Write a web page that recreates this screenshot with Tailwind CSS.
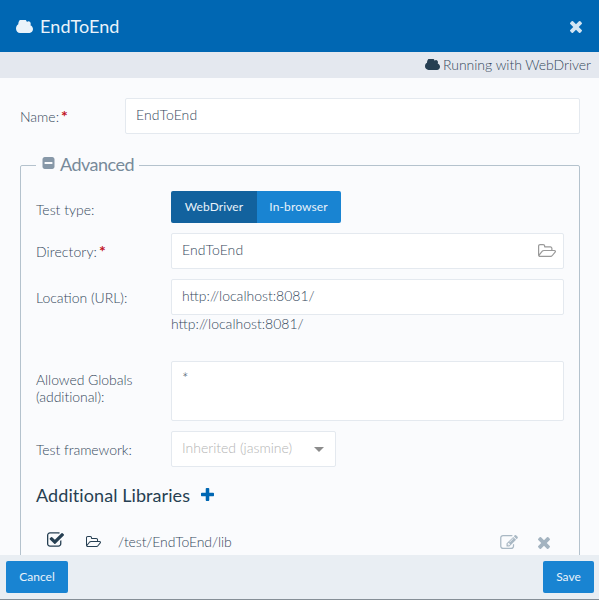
<!DOCTYPE html>
<html lang="en">
<head>
<meta charset="utf-8">
<title>EndToEnd</title>
<script src="https://cdn.jsdelivr.net/npm/@tailwindcss/browser@4"></script>
</head>
<body class="w-[599px] h-[600px] overflow-hidden flex flex-col bg-[#fafbfd] font-['Lato',sans-serif] font-light text-[14px] leading-[17px] text-[#35495c]">
<svg class="hidden">
  <symbol id="cloud" viewBox="0 256 1920 1280" preserveAspectRatio="none"><path d="M1920 1152q0 159-112.500 271.500t-271.500 112.500h-1088q-185 0-316.500-131.500t-131.500-316.500q0-132 71-241.500t187-163.500q-2-28-2-43 0-212 150-362t362-150q158 0 286.500 88t187.500 230q70-62 166-62 106 0 181 75t75 181q0 75-41 138 129 30 213 134.500t84 239.500z"/></symbol>
  <symbol id="times" viewBox="302 366 1188 1188"><path d="M1490 1322q0 40-28 68l-136 136q-28 28-68 28t-68-28l-294-294-294 294q-28 28-68 28t-68-28l-136-136q-28-28-28-68t28-68l294-294-294-294q-28-28-28-68t28-68l136-136q28-28 68-28t68 28l294 294 294-294q28-28 68-28t68 28l136 136q28 28 28 68t-28 68l-294 294 294 294q28 28 28 68z"/></symbol>
  <symbol id="plus" viewBox="192 128 1408 1408"><path d="M1600 736v192q0 40-28 68t-68 28h-416v416q0 40-28 68t-68 28h-192q-40 0-68-28t-28-68v-416h-416q-40 0-68-28t-28-68v-192q0-40 28-68t68-28h416v-416q0-40 28-68t68-28h192q40 0 68 28t28 68v416h416q40 0 68 28t28 68z"/></symbol>
  <symbol id="minus" viewBox="128 128 1536 1536"><path d="M1408 960v-128q0-26-19-45t-45-19h-896q-26 0-45 19t-19 45v128q0 26 19 45t45 19h896q26 0 45-19t19-45zm256-544v960q0 119-84.500 203.500t-203.500 84.500h-960q-119 0-203.500-84.500t-84.500-203.500v-960q0-119 84.500-203.500t203.500-84.500h960q119 0 203.500 84.500t84.500 203.500z"/></symbol>
  <symbol id="folder" viewBox="64 128 1909 1408" preserveAspectRatio="none"><path d="M1845 931q0-35-53-35h-1088q-40 0-85.500 21.500t-71.500 52.500l-294 363q-18 24-18 40 0 35 53 35h1088q40 0 86-22t71-53l294-363q18-22 18-39zm-1141-163h768v-160q0-40-28-68t-68-28h-576q-40 0-68-28t-28-68v-64q0-40-28-68t-68-28h-320q-40 0-68 28t-28 68v853l256-315q44-53 116-87.500t140-34.500zm1269 163q0 62-46 120l-295 363q-43 53-116 87.500t-140 34.500h-1088q-92 0-158-66t-66-158v-960q0-92 66-158t158-66h320q92 0 158 66t66 158v32h544q92 0 158 66t66 158v160h192q54 0 99 24.500t67 70.500q15 32 15 68z"/></symbol>
  <symbol id="check" viewBox="64 128 1663 1408"><path d="M1472 930v318q0 119-84.500 203.500t-203.500 84.500h-832q-119 0-203.500-84.500t-84.500-203.500v-832q0-119 84.500-203.500t203.500-84.500h832q63 0 117 25 15 7 18 23 3 17-9 29l-49 49q-10 10-23 10-3 0-9-2-23-6-45-6h-832q-66 0-113 47t-47 113v832q0 66 47 113t113 47h832q66 0 113-47t47-113v-254q0-13 9-22l64-64q10-10 23-10 6 0 12 3 20 8 20 29zm231-489l-814 814q-24 24-57 24t-57-24l-430-430q-24-24-24-57t24-57l110-110q24-24 57-24t57 24l263 263 647-647q24-24 57-24t57 24l110 110q24 24 24 57t-24 57z"/></symbol>
  <symbol id="edit" viewBox="0 128 1784 1408"><path d="M888 1184l116-116-152-152-116 116v56h96v96h56zm440-720q-16-16-33 1l-350 350q-17 17-1 33t33-1l350-350q17-17 1-33zm80 594v190q0 119-84.500 203.500t-203.500 84.500h-832q-119 0-203.500-84.500t-84.500-203.500v-832q0-119 84.500-203.500t203.500-84.500h832q63 0 117 25 15 7 18 23 3 17-9 29l-49 49q-14 14-32 8-23-6-45-6h-832q-66 0-113 47t-47 113v832q0 66 47 113t113 47h832q66 0 113-47t47-113v-126q0-13 9-22l64-64q15-15 35-7t20 29zm-96-738l288 288-672 672h-288v-288zm444 132l-92 92-288-288 92-92q28-28 68-28t68 28l152 152q28 28 28 68t-28 68z"/></symbol>
</svg>

<header class="h-[52px] shrink-0 bg-[#0067b3] flex items-center pl-4 pr-[17px] text-[#eaf3fa] fill-current">
  <svg class="w-[17px] h-[13px]"><use href="#cloud"/></svg>
  <h1 class="ml-[7px] text-[18px] leading-[22px] font-normal tracking-[0.1px]">EndToEnd</h1>
  <svg class="ml-auto mt-[2px] w-[12px] h-[12px] text-[#d3e5f3] fill-current"><use href="#times"/></svg>
</header>
<div class="h-[26px] shrink-0 bg-[#e4e8ef] flex items-center justify-end pr-2 pb-px">
  <svg class="w-[15px] h-[11px] mr-[3px] fill-[#263f52]"><use href="#cloud"/></svg>
  <span class="-tracking-[0.03px]">Running with WebDriver</span>
</div>

<main class="flex-1 min-h-0 overflow-hidden px-5 pt-5 pr-[19px]">
  <div class="flex h-9">
    <label class="w-[105px] pt-[10px]">Name:<span class="ml-[2px] text-[16px] leading-[14px] font-bold text-[#c1121f]">*</span></label>
    <div class="flex-1 bg-white border border-[#e4e9ef] rounded-[2px] px-[10px] pt-[7px] tracking-[0.1px]">EndToEnd</div>
  </div>
  <fieldset class="mt-[20px] h-[500px] border border-[#b4c2cd] rounded-[2px] px-[15px]">
    <legend class="h-[22px] pl-[6px] pr-[5px] pb-[2px] flex items-center text-[18px] leading-[22px] font-normal text-[#778a9a] tracking-[-0.52px]">
      <svg class="w-[13px] h-[12px] mr-[5px] mb-[3px] fill-[#8798a8]"><use href="#minus"/></svg>Advanced
    </legend>
    <div class="flex h-8 mt-[15px]">
      <span class="w-[135px] pt-[10px]">Test type:</span>
      <div class="flex text-[12px] font-normal text-[#e8f2fa]">
        <div class="w-[86px] h-8 bg-[#12629e] rounded-l-[2px] flex items-center justify-center pb-px tracking-[0.1px]">WebDriver</div>
        <div class="w-[84px] h-8 bg-[#1984d2] rounded-r-[2px] flex items-center justify-center pr-px pb-px tracking-[0.1px]">In-browser</div>
      </div>
    </div>
    <div class="flex h-9 mt-[10px]">
      <label class="w-[135px] pt-[10px] tracking-[0.1px]">Directory:<span class="ml-[2px] text-[16px] leading-[14px] font-bold text-[#c1121f]">*</span></label>
      <div class="flex-1 flex bg-white border border-[#e4e9ef] rounded-[2px] pl-[10px] pr-[7px] pt-[7px]">
        <span class="flex-1 tracking-[0.1px]">EndToEnd</span>
        <svg class="w-[18px] h-[13px] mt-[3px] fill-[#999]"><use href="#folder"/></svg>
      </div>
    </div>
    <div class="flex mt-[10px] h-[72px]">
      <label class="w-[135px] pt-[10px]">Location (URL):</label>
      <div class="flex-1">
        <div class="h-9 bg-white border border-[#e4e9ef] rounded-[2px] px-[10px] pt-[7px]">http://localhost:8081/</div>
        <div>http://localhost:8081/</div>
      </div>
    </div>
    <div class="flex h-[60px] mt-[10px]">
      <label class="w-[135px] pt-[10px] tracking-[-0.05px]">Allowed Globals<br>(additional):</label>
      <div class="flex-1 bg-white border border-[#e4e9ef] rounded-[2px] px-[10px] pt-[8px] text-[15px]">*</div>
    </div>
    <div class="flex h-9 mt-[10px]">
      <label class="w-[135px] pt-[10px] tracking-[-0.05px]">Test framework:</label>
      <div class="w-[165px] flex bg-white border border-[#e4e9ef] rounded-[2px] pl-[10px] pr-[11px] pt-[7px] text-[#b4b4b4]">
        <span class="flex-1">Inherited (jasmine)</span>
        <svg class="w-[10px] h-[5px] mt-[8px] fill-[#8c8c8c]" viewBox="0 0 10 5"><path d="M0 0h10l-5 5z"/></svg>
      </div>
    </div>
    <div class="flex items-center h-[22px] mt-[17px] text-[18px] leading-[22px] font-normal text-[#263f52]">
      <h2 class="tracking-[0.08px]">Additional Libraries</h2>
      <svg class="ml-[11px] w-[13px] h-[13px] mb-px fill-[#0067b3]"><use href="#plus"/></svg>
    </div>
    <div class="flex items-center h-[17px] mt-[27px] pl-[11px] pr-[14px]">
      <svg class="w-[17px] h-[15px] mb-[4px] fill-[#263f52]"><use href="#check"/></svg>
      <svg class="ml-[22px] w-[15px] h-[11px] fill-[#263f52]"><use href="#folder"/></svg>
      <span class="ml-[17px] tracking-[-0.1px]">/test/EndToEnd/lib</span>
      <svg class="ml-auto w-[18px] h-[14px] fill-[#a9b8c4]"><use href="#edit"/></svg>
      <svg class="ml-[20px] mt-[2px] w-[12px] h-[12px] fill-[#a3b3c0]"><use href="#times"/></svg>
    </div>
  </fieldset>
</main>

<footer class="h-[45px] shrink-0 bg-[#e9eef3] border-b border-[#858e96] flex justify-between pt-[6px] pl-[6px] pr-[5px] text-[12px] font-normal text-[#e8f2fa]">
  <button class="w-[62px] h-8 bg-[#1984d2] rounded-[2px] pb-px">Cancel</button>
  <button class="w-[51px] h-8 bg-[#1984d2] rounded-[2px] pb-px">Save</button>
</footer>
</body>
</html>
